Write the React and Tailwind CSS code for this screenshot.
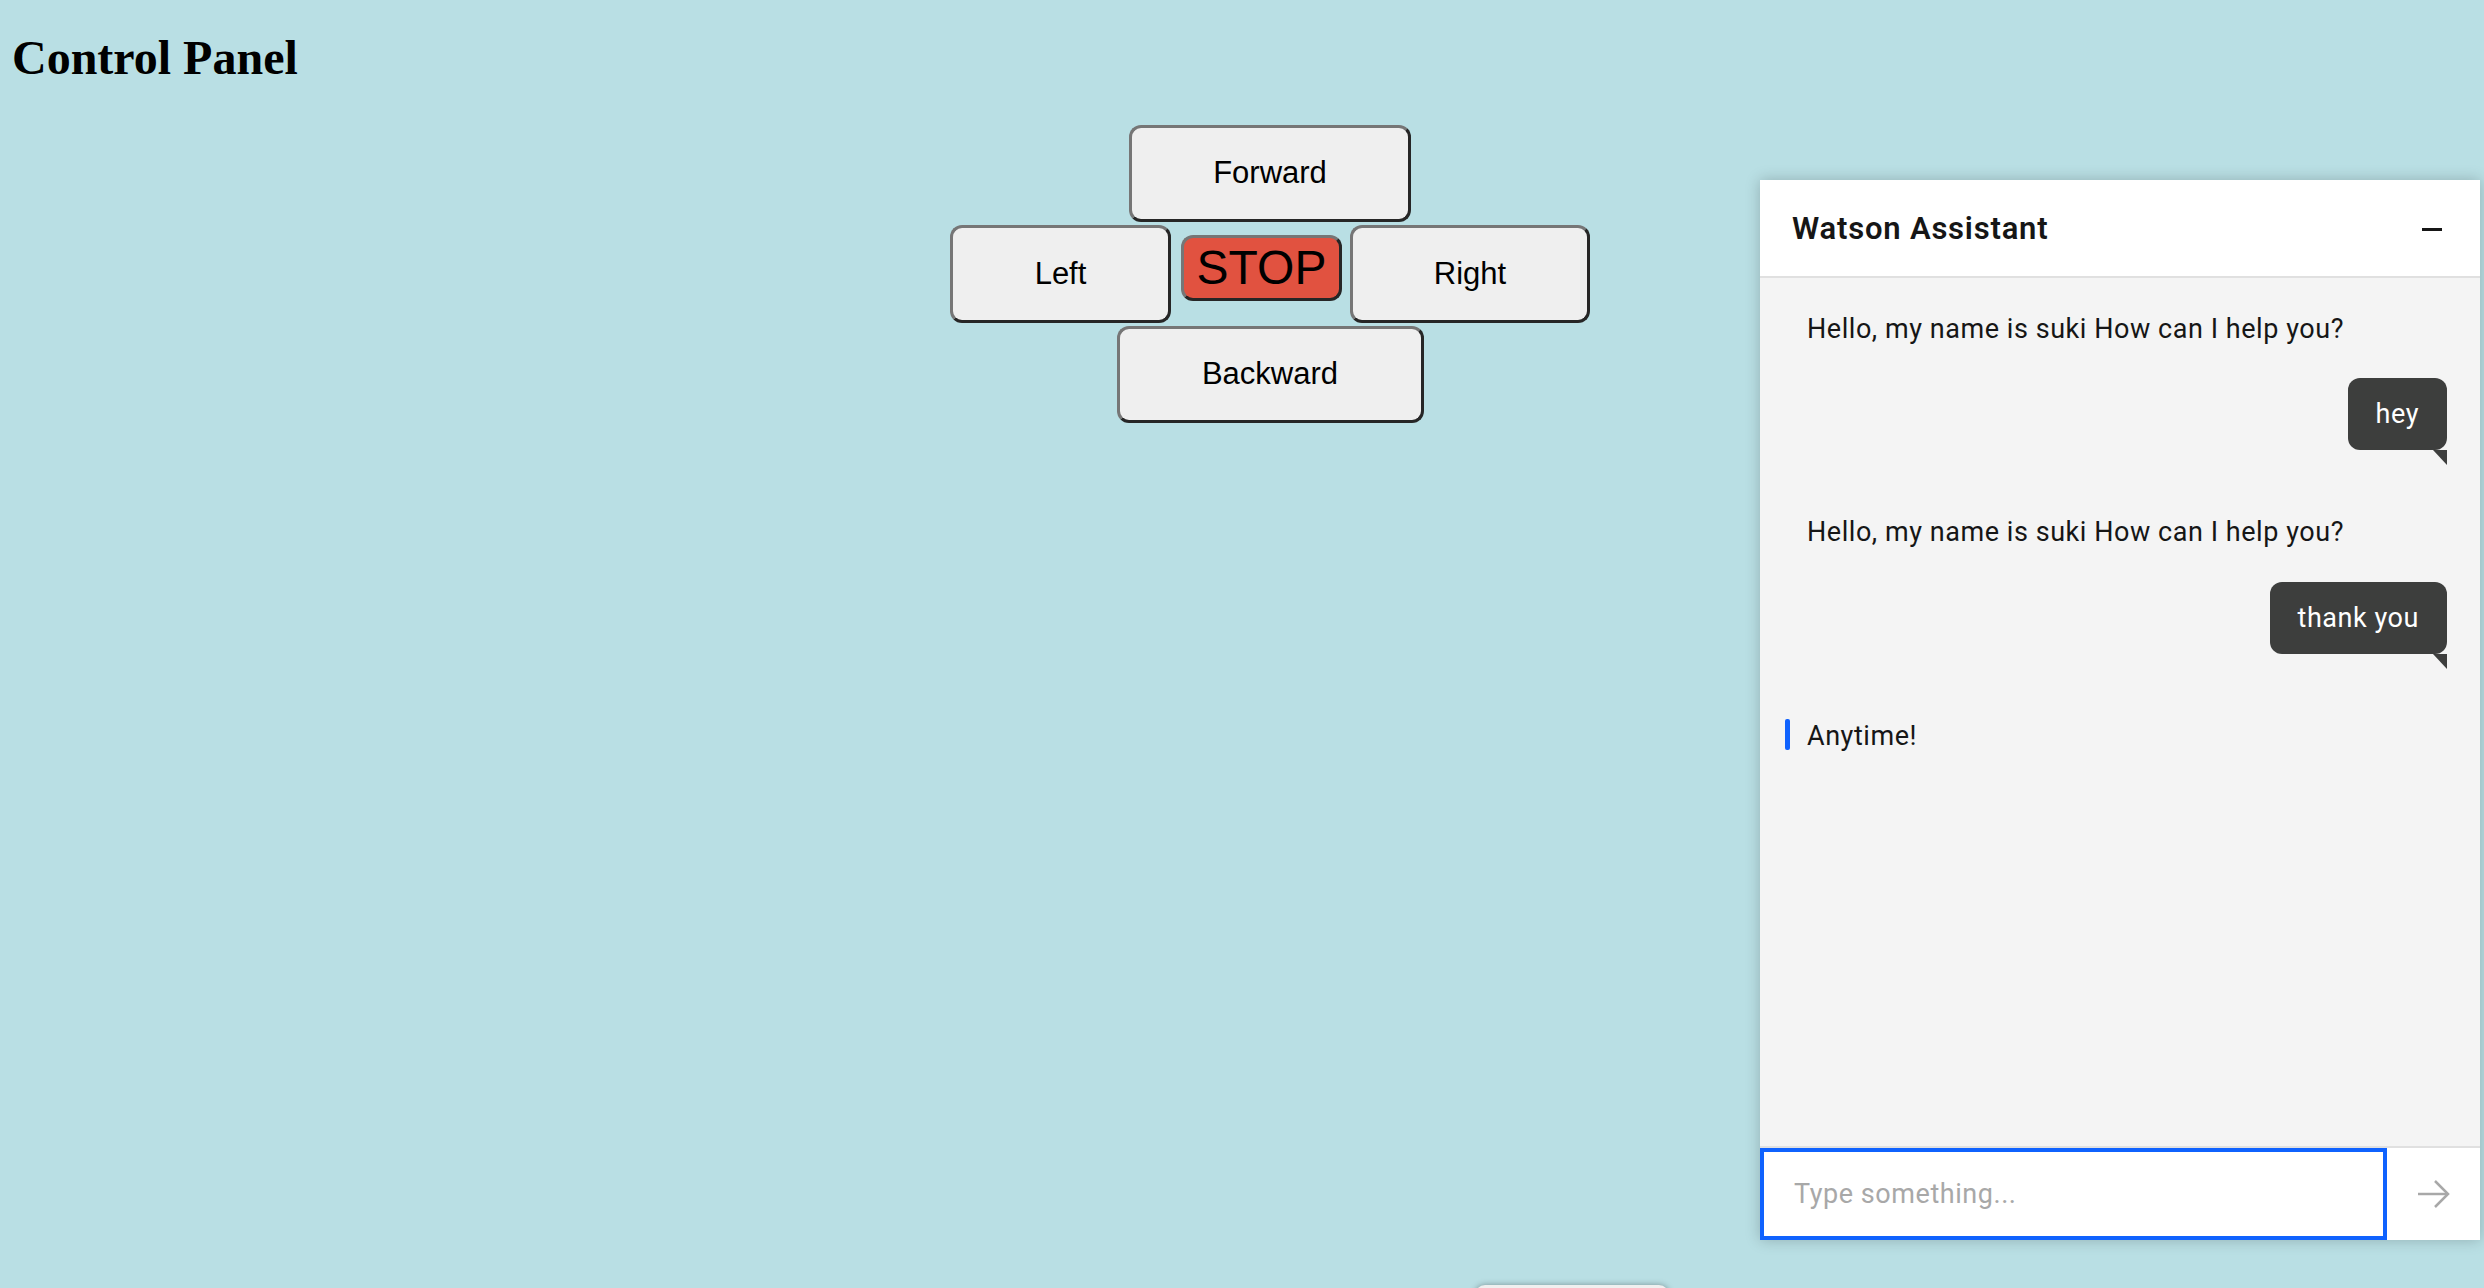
import React from "react";

function Bubble({ children }) {
  return (
    <div className="relative h-[72px] rounded-[12px] bg-[#3d3e3d] px-[28px] flex items-center text-white">
      {children}
      <span className="absolute right-0 top-full w-0 h-0 border-t-[15px] border-t-[#3d3e3d] border-l-[14px] border-l-transparent"></span>
    </div>
  );
}

const btn =
  "flex items-center justify-center rounded-[12px] border-[3px] border-t-[#767676] border-l-[#767676] border-b-[#262626] border-r-[#262626] bg-[#efefef] text-[31px] text-black font-['Liberation_Sans',Arial,sans-serif]";

export default function App() {
  return (
    <div className="relative min-h-[1288px] bg-[#b9dfe4] overflow-hidden">
      <h1 className="m-0 pl-[12px] pt-[30px] text-[48px] leading-[55px] font-bold text-black font-['Liberation_Serif','Times_New_Roman',serif]">
        Control Panel
      </h1>

      <div className="mt-[40px] pl-[56px] flex flex-col items-center gap-[3px]">
        <button className={`${btn} w-[282px] h-[97px]`}>Forward</button>
        <div className="flex items-start">
          <button className={`${btn} w-[221px] h-[98px]`}>Left</button>
          <button className="ml-[10px] mt-[10px] w-[161px] h-[66px] flex items-center justify-center rounded-[12px] border-[3px] border-t-[#767676] border-l-[#767676] border-b-[#262626] border-r-[#262626] bg-[#e15240] text-[48px] leading-none text-black font-['Liberation_Sans',Arial,sans-serif]">
            STOP
          </button>
          <button className={`${btn} ml-[8px] w-[240px] h-[98px]`}>Right</button>
        </div>
        <button className={`${btn} w-[307px] h-[97px]`}>Backward</button>
      </div>

      <div className="mt-[862px] ml-[1475px] w-[194px] h-[60px] rounded-[10px] bg-[#efefef] shadow-[0_0_6px_rgba(0,0,0,0.35)]"></div>

      <div className="absolute left-[1760px] top-[180px] w-[720px] h-[1060px] flex flex-col bg-white shadow-[0_0_14px_rgba(0,0,0,0.22)] font-['Roboto','Noto_Sans',sans-serif] text-[#161616]">
        <div className="h-[98px] shrink-0 bg-white border-b-2 border-[#e0e0e0] flex items-center justify-between pl-[32px] pr-[38px] pt-[2px]">
          <span className="text-[31px] font-semibold tracking-[0.8px]">Watson Assistant</span>
          <span className="block w-[20px] h-[3px] bg-[#161616]"></span>
        </div>

        <div className="flex-1 bg-[#f4f4f4] pt-[33px] pl-[47px] pr-[33px] text-[27px] leading-[36px] tracking-[0.55px]">
          <p>Hello, my name is suki How can I help you?</p>
          <div className="mt-[31px] flex justify-end">
            <Bubble>hey</Bubble>
          </div>
          <p className="mt-[64px]">Hello, my name is suki How can I help you?</p>
          <div className="mt-[32px] flex justify-end">
            <Bubble>thank you</Bubble>
          </div>
          <div className="mt-[64px] relative">
            <span className="absolute left-[-22px] top-[1px] w-[5px] h-[31px] rounded-[2px] bg-[#0f62fe]"></span>
            Anytime!
          </div>
        </div>

        <div className="h-[94px] shrink-0 border-t-2 border-[#e0e0e0] flex">
          <div className="w-[627px] h-full border-4 border-[#0f62fe] bg-white flex items-center pl-[30px] text-[27px] tracking-[0.55px] text-[#a8a8a8]">
            Type something...
          </div>
          <div className="flex-1 bg-white flex items-center justify-center">
            <svg width="32" height="28" viewBox="0 0 32 28" fill="none" stroke="#a8a8a8" strokeWidth="2.5">
              <path d="M0 14 H30" />
              <path d="M17 1 L30 14 L17 27" />
            </svg>
          </div>
        </div>
      </div>
    </div>
  );
}
